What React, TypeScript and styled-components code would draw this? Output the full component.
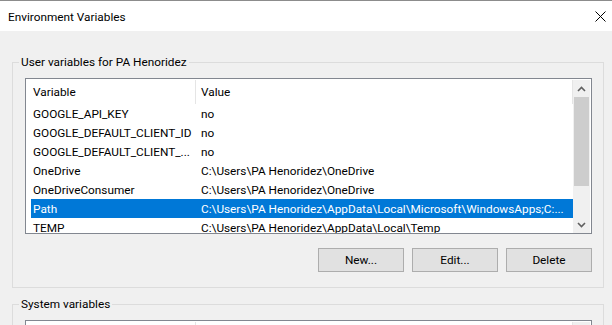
import React from "react";
import styled, { createGlobalStyle } from "styled-components";

interface EnvVar {
  name: string;
  value: string;
}

const userVars: EnvVar[] = [
  { name: "GOOGLE_API_KEY", value: "no" },
  { name: "GOOGLE_DEFAULT_CLIENT_ID", value: "no" },
  { name: "GOOGLE_DEFAULT_CLIENT_...", value: "no" },
  { name: "OneDrive", value: "C:\\Users\\PA Henoridez\\OneDrive" },
  { name: "OneDriveConsumer", value: "C:\\Users\\PA Henoridez\\OneDrive" },
  {
    name: "Path",
    value: "C:\\Users\\PA Henoridez\\AppData\\Local\\Microsoft\\WindowsApps;C:...",
  },
  { name: "TEMP", value: "C:\\Users\\PA Henoridez\\AppData\\Local\\Temp" },
];

const GlobalStyle = createGlobalStyle`
  *, *::before, *::after {
    box-sizing: border-box;
  }
  html, body {
    margin: 0;
    padding: 0;
    overflow: hidden;
    background-color: #f0f0f0;
  }
  body {
    font-family: Roboto, "Noto Sans", sans-serif;
    font-size: 11.8px;
    color: #000;
  }
`;

const Window = styled.div`
  width: 612px;
  height: 325px;
  display: flex;
  flex-direction: column;
  background-color: #f0f0f0;
  overflow: hidden;
`;

const TitleBar = styled.div`
  height: 31px;
  flex-shrink: 0;
  border-top: 1px solid #8c8c8c;
  background-color: #fff;
  display: flex;
  align-items: center;
  justify-content: space-between;
  padding: 0 6px 0 8px;
`;

const Title = styled.span`
  padding-top: 2px;
`;

const Body = styled.div`
  display: flex;
  flex-direction: column;
  gap: 8px;
  padding: 23px 8px 0 12px;
`;

const Group = styled.fieldset`
  margin: 0;
  min-width: 0;
  border: 1px solid #dcdcdc;
  padding: 8px 11px 15px 12px;
`;

const Legend = styled.legend`
  padding: 1px 2px 0;
  margin-left: -6px;
  line-height: 15px;
`;

const ListView = styled.div<{ $height: number }>`
  height: ${(p) => p.$height}px;
  border: 1px solid #828790;
  background-color: #fff;
  padding: 1px 1px 0 0;
  display: flex;
  overflow: hidden;
`;

const Columns = styled.div`
  flex: 1;
  min-width: 0;
  display: flex;
  flex-direction: column;
  overflow: hidden;
`;

const Header = styled.div`
  display: grid;
  grid-template-columns: 170px 1fr;
  height: 24px;
  flex-shrink: 0;
`;

const HeaderCell = styled.div<{ $pad: number }>`
  padding: 1px 0 0 ${(p) => p.$pad}px;
  line-height: 23px;
  border-right: 1px solid #e5e5e5;
  white-space: nowrap;
  overflow: hidden;
`;

const Row = styled.div<{ $selected?: boolean }>`
  display: grid;
  grid-template-columns: 165px 1fr;
  height: 19px;
  flex-shrink: 0;
  margin-left: 5px;
  background-color: ${(p) => (p.$selected ? "#0078d7" : "transparent")};
  color: ${(p) => (p.$selected ? "#fff" : "#000")};
`;

const Cell = styled.div<{ $pad: number }>`
  padding: 1px 0 0 ${(p) => p.$pad}px;
  line-height: 18px;
  white-space: nowrap;
  overflow: hidden;
`;

const ScrollBar = styled.div`
  width: 17px;
  flex-shrink: 0;
  background-color: #f0f0f0;
  display: flex;
  flex-direction: column;
`;

const ScrollArrow = styled.div`
  height: 17px;
  flex-shrink: 0;
  display: flex;
  align-items: center;
  justify-content: center;
`;

const ScrollTrack = styled.div`
  flex: 1;
  display: flex;
  flex-direction: column;
`;

const Thumb = styled.div<{ $height: number }>`
  height: ${(p) => p.$height}px;
  margin: 0 1px;
  background-color: #cdcdcd;
`;

const ButtonRow = styled.div`
  display: flex;
  justify-content: flex-end;
  gap: 8px;
  margin-top: 14px;
`;

const Button = styled.button`
  width: 86px;
  height: 24px;
  padding: 0;
  background-color: #e1e1e1;
  border: 1px solid #adadad;
  font-family: inherit;
  font-size: 11.8px;
  color: #000;
`;

const Chevron: React.FC<{ up?: boolean }> = ({ up }) => (
  <svg width="9" height="6" viewBox="0 0 9 6">
    <path
      d={up ? "M1 5 L4.5 1.5 L8 5" : "M1 1 L4.5 4.5 L8 1"}
      fill="none"
      stroke="#606060"
      strokeWidth="1.6"
    />
  </svg>
);

const CloseIcon = () => (
  <svg width="11" height="11" viewBox="0 0 11 11">
    <path d="M0.5 0.5 L10.5 10.5 M10.5 0.5 L0.5 10.5" stroke="#000" strokeWidth="1" />
  </svg>
);

const VarList: React.FC<{
  items: EnvVar[];
  height: number;
  selected?: string;
  labels?: boolean;
}> = ({ items, height, selected, labels = true }) => (
  <ListView $height={height}>
    <Columns>
      <Header>
        <HeaderCell $pad={7}>{labels && "Variable"}</HeaderCell>
        <HeaderCell $pad={5}>{labels && "Value"}</HeaderCell>
      </Header>
      {items.map((v) => (
        <Row key={v.name} $selected={v.name === selected}>
          <Cell $pad={2}>{v.name}</Cell>
          <Cell $pad={5}>{v.value}</Cell>
        </Row>
      ))}
    </Columns>
    <ScrollBar>
      <ScrollArrow>
        <Chevron up />
      </ScrollArrow>
      <ScrollTrack>
        <Thumb $height={89} />
      </ScrollTrack>
      <ScrollArrow>
        <Chevron />
      </ScrollArrow>
    </ScrollBar>
  </ListView>
);

const App: React.FC = () => (
  <Window>
    <GlobalStyle />
    <TitleBar>
      <Title>Environment Variables</Title>
      <CloseIcon />
    </TitleBar>
    <Body>
      <Group>
        <Legend>User variables for PA Henoridez</Legend>
        <VarList items={userVars} height={156} selected="Path" />
        <ButtonRow>
          <Button>New...</Button>
          <Button>Edit...</Button>
          <Button>Delete</Button>
        </ButtonRow>
      </Group>
      <Group>
        <Legend>System variables</Legend>
        <VarList items={[]} height={156} labels={false} />
      </Group>
    </Body>
  </Window>
);

export default App;
